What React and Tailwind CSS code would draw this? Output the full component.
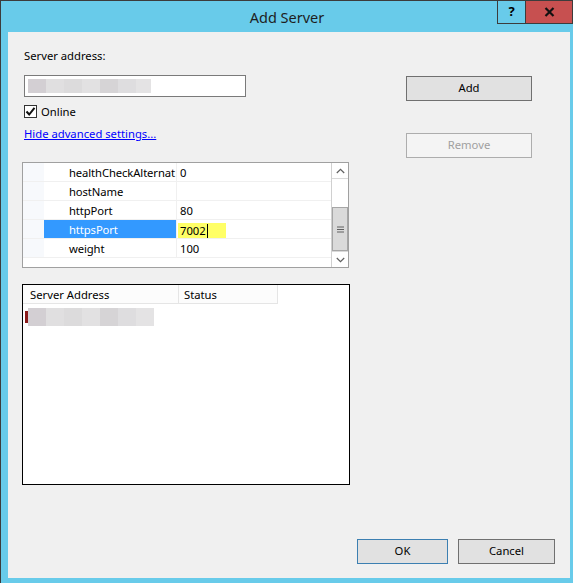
import React from "react";

const font = "font-['Segoe_UI','Noto_Sans',sans-serif]";

function Blur({ widths, h = 14 }) {
  const colors = ["#d3cfd3", "#e0dfe0", "#dcdbdc", "#e2e1e2", "#d6d4d6", "#dedddf", "#e4e3e4"];
  return (
    <div className="flex">
      {widths.map((w, i) => (
        <div key={i} style={{ width: w, height: h, background: colors[i % colors.length] }} />
      ))}
    </div>
  );
}

function PropRow({ name, value, selected }) {
  return (
    <div className="flex h-[19px] border-b border-[#f0f0f0]">
      <div className="w-[21px] shrink-0 bg-[#f7f9fc]" />
      <div
        className={
          "w-[133px] shrink-0 pl-[25px] pt-px leading-[18px] border-r border-[#f0f0f0] overflow-hidden whitespace-nowrap tracking-[-0.1px] " +
          (selected ? "bg-[#3399ff] text-white" : "text-black")
        }
      >
        {name}
      </div>
      <div className="flex-1 pl-[3px] pt-px leading-[18px] text-black">
        {selected ? (
          <div className="mt-[2px] ml-[-2px] flex h-[15px] w-[48px] items-center bg-[#ffff66] pl-[2px] leading-[15px]">
            {value}
            <span className="ml-[1px] inline-block h-[14px] w-px bg-black" />
          </div>
        ) : (
          value
        )}
      </div>
    </div>
  );
}

export default function App() {
  return (
    <div className={"w-[573px] h-[583px] bg-[#68cbea] border-l border-t border-[#3c3c3c] flex flex-col text-[11.25px] " + font}>
      {/* Title bar */}
      <div className="relative h-[31px] shrink-0 flex items-center justify-center">
        <span className="text-[14.5px] text-[#1e1e1e] mt-[3px]">Add Server</span>
        <div className="absolute right-0 top-[-1px] flex">
          <div className="w-[29px] h-[24px] border border-[#3c3c3c] flex items-center justify-center text-[13px] font-bold text-black">?</div>
          <div className="w-[47px] h-[24px] border border-l-0 border-[#3c3c3c] bg-[#c75050] flex items-center justify-center">
            <svg width="11" height="10" viewBox="0 0 11 10">
              <path d="M1.5 1 L9.5 9 M9.5 1 L1.5 9" stroke="#111" strokeWidth="2.2" />
            </svg>
          </div>
        </div>
      </div>

      {/* Client area */}
      <div className="ml-[7px] mr-[3px] h-[546px] bg-[#f0f0f0] flex flex-col">
        {/* Top section */}
        <div className="h-[130px] shrink-0 flex pt-[16px]">
          <div className="pl-[16px] flex flex-col">
            <div className="h-[16px] leading-[16px] text-black">Server address:</div>
            <div className="mt-[11px] w-[222px] h-[22px] bg-white border border-[#7a7a7a] pl-[3px] pt-[3px]">
              <Blur widths={[18, 18, 18, 18, 18, 18, 15]} />
            </div>
            <div className="mt-[8px] flex items-center h-[13px]">
              <div className="w-[13px] h-[13px] bg-white border border-[#333] flex items-center justify-center">
                <svg width="11" height="11" viewBox="0 0 11 11">
                  <path d="M1.5 5.5 L4.2 8.5 L9.5 1.8" fill="none" stroke="#111" strokeWidth="2" />
                </svg>
              </div>
              <span className="ml-[4px] text-black leading-[13px]">Online</span>
            </div>
            <div className="mt-[8px] h-[16px] leading-[16px] text-[#0000ff] underline">Hide advanced settings...</div>
          </div>
          <div className="ml-auto mr-[38px] flex flex-col">
            <div className="mt-[28px] w-[126px] h-[25px] bg-[#e1e1e1] border border-[#707070] flex items-center justify-center text-black">Add</div>
            <div className="mt-[32px] w-[126px] h-[25px] bg-[#f4f4f4] border border-[#adadad] flex items-center justify-center text-[#a0a0a0]">Remove</div>
          </div>
        </div>

        {/* Property grid */}
        <div className="ml-[14px] w-[327px] h-[106px] shrink-0 border border-[#a0a0a0] bg-white flex">
          <div className="flex-1 flex flex-col">
            <PropRow name="healthCheckAlternat" value="0" />
            <PropRow name="hostName" value="" />
            <PropRow name="httpPort" value="80" />
            <PropRow name="httpsPort" value="7002" selected />
            <PropRow name="weight" value="100" />
          </div>
          <div className="w-[17px] shrink-0 flex flex-col border-l border-[#d0d0d0] bg-white">
            <div className="h-[16px] border-b border-[#d9d9d9] flex items-center justify-center">
              <svg width="9" height="6" viewBox="0 0 9 6"><path d="M0.8 5 L4.5 1.3 L8.2 5" fill="none" stroke="#606060" strokeWidth="1.2" /></svg>
            </div>
            <div className="h-[28px]" />
            <div className="h-[44px] bg-[#dadada] border border-[#a6a6a6] flex items-center justify-center">
              <svg width="7" height="7" viewBox="0 0 7 7"><path d="M0 1 H7 M0 3.5 H7 M0 6 H7" stroke="#606060" strokeWidth="1.2" /></svg>
            </div>
            <div className="flex-1 border-t border-[#d9d9d9] flex items-center justify-center">
              <svg width="9" height="6" viewBox="0 0 9 6"><path d="M0.8 1 L4.5 4.7 L8.2 1" fill="none" stroke="#606060" strokeWidth="1.2" /></svg>
            </div>
          </div>
        </div>

        {/* Server list */}
        <div className="mt-[16px] ml-[14px] w-[328px] h-[201px] shrink-0 border border-black bg-white flex flex-col">
          <div className="flex h-[19px] shrink-0">
            <div className="w-[156px] border-r border-b border-[#e5e5e5] bg-[#fcfcfc] pl-[7px] pt-px leading-[18px] text-black">Server Address</div>
            <div className="w-[99px] border-r border-b border-[#e5e5e5] bg-[#fcfcfc] pl-[5px] pt-px leading-[18px] text-black">Status</div>
          </div>
          <div className="mt-[4px] flex items-start pl-[2px]">
            <div className="w-[3px] h-[12px] mt-[3px] bg-[#8b1a1a]" />
            <Blur widths={[18, 18, 18, 18, 18, 18, 18]} h={18} />
          </div>
        </div>

        {/* Bottom buttons */}
        <div className="mt-auto mb-[14px] mr-[15px] flex justify-end gap-[10px]">
          <div className="w-[91px] h-[25px] bg-[#e1e1e1] border border-[#3c7fb1] flex items-center justify-center text-black">OK</div>
          <div className="w-[97px] h-[25px] bg-[#e1e1e1] border border-[#707070] flex items-center justify-center text-black">Cancel</div>
        </div>
      </div>
    </div>
  );
}
